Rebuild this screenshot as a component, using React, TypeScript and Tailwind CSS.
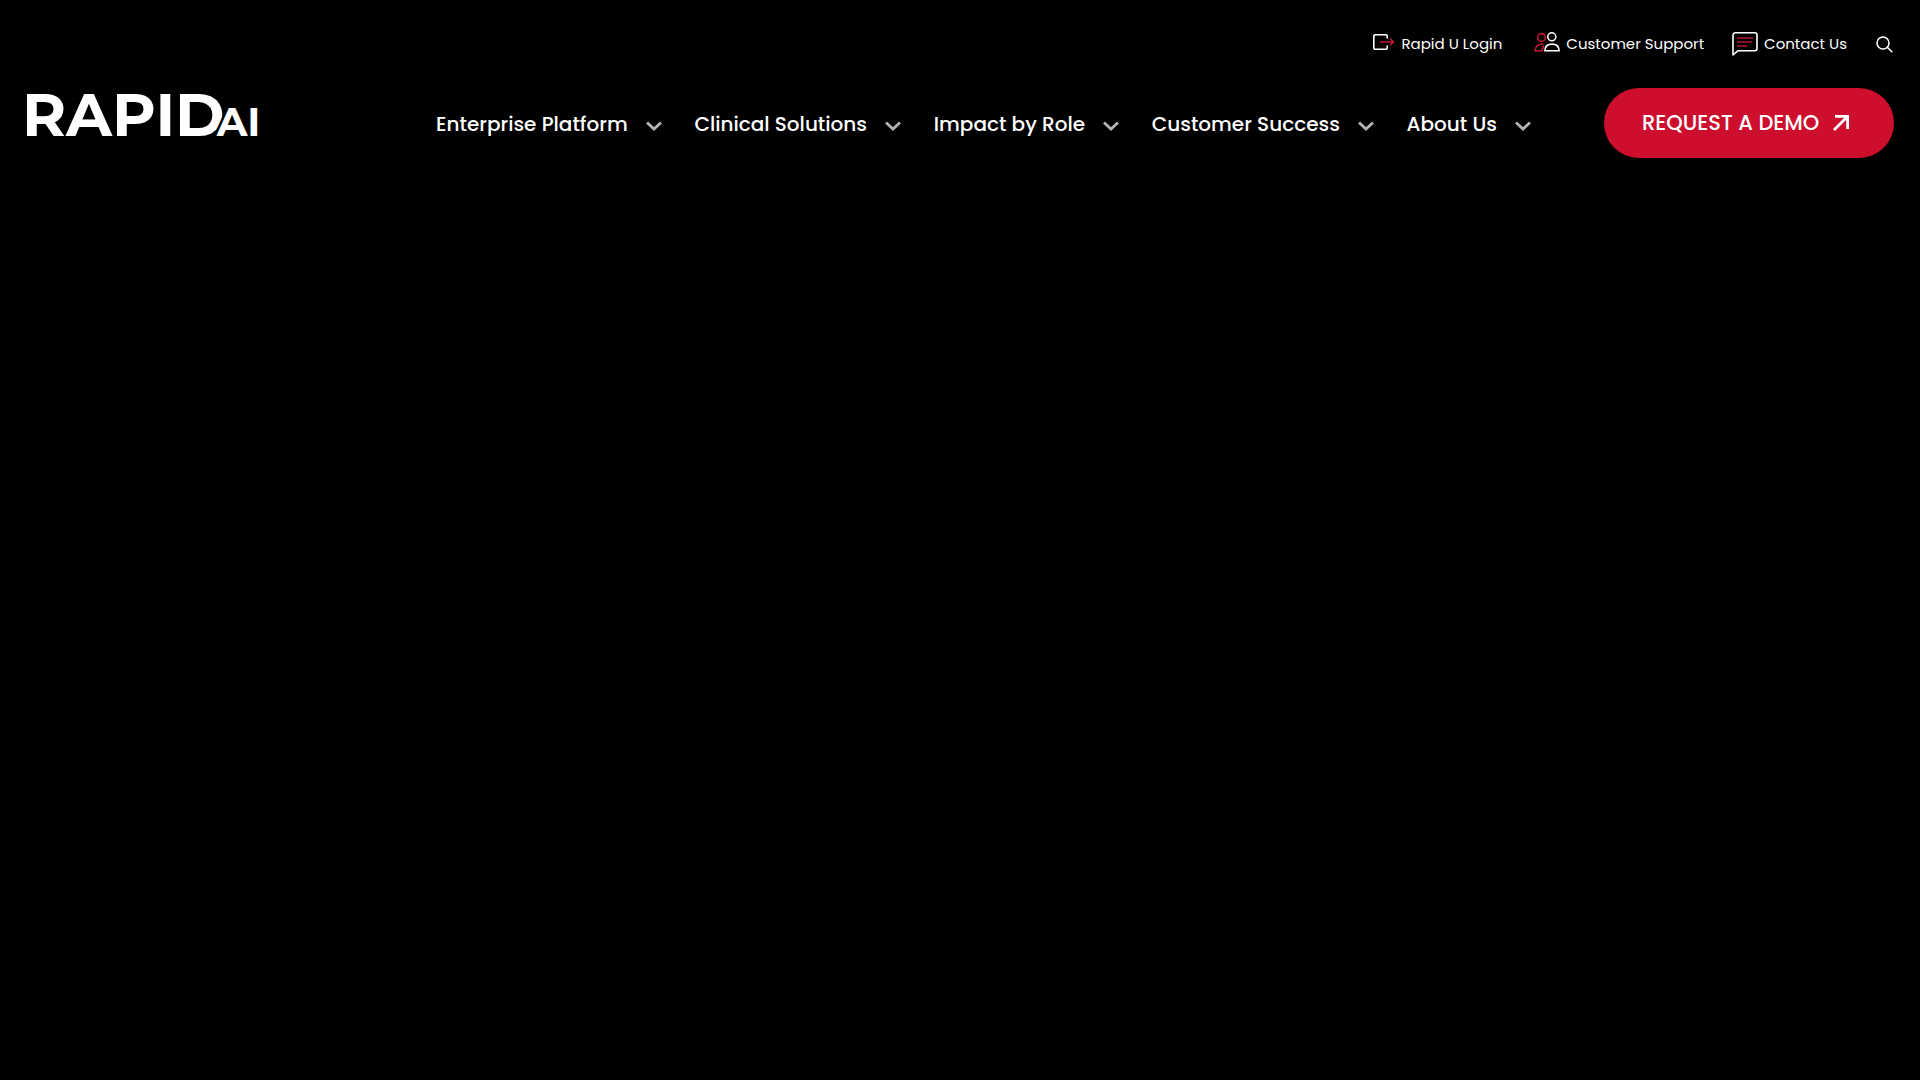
import React from "react";

const menu = [
  "Enterprise Platform",
  "Clinical Solutions",
  "Impact by Role",
  "Customer Success",
  "About Us",
];

function LoginIcon() {
  return (
    <svg className="-mt-1 h-4 w-[22px]" viewBox="0 0 22 16" fill="none" aria-hidden="true">
      <path d="M14.200 4.500V2A1.200 1.200 0 0 0 13 .8H2A1.200 1.200 0 0 0 .8 2v12A1.200 1.200 0 0 0 2 15.200h11a1.200 1.200 0 0 0 1.200-1.200v-2.500" stroke="#fff" strokeWidth="1.600" />
      <path d="M7 8h13.500M17 4.500 20.500 8 17 11.500" stroke="#c41732" strokeWidth="1.500" />
    </svg>
  );
}

function PeopleIcon() {
  return (
    <svg className="-mt-1 h-5 w-[26px]" viewBox="0 0 26 20" fill="none" strokeWidth="1.600" aria-hidden="true">
      <g stroke="#c41732">
        <circle cx="7.500" cy="5.500" r="3.900" />
        <path d="M9.500 12C4.500 11.600 1.500 14 .9 18.800h7.300c.1-2.200.8-4 1.800-5.300" />
      </g>
      <g stroke="#fff">
        <circle cx="17.800" cy="4.800" r="4" fill="#000" />
        <path d="M10.800 18.800c.2-4 2.800-6.700 7.200-6.700s7 2.700 7.200 6.700z" strokeLinejoin="round" />
      </g>
    </svg>
  );
}

function MessageIcon() {
  return (
    <svg className="h-6 w-[26px]" viewBox="0 0 26 24" fill="none" aria-hidden="true">
      <path d="M1 23V3a2.200 2.200 0 0 1 2.200-2.200h19.600A2.200 2.200 0 0 1 25 3v13.500a2.200 2.200 0 0 1-2.200 2.200H6z" stroke="#fff" strokeWidth="1.600" strokeLinejoin="round" />
      <path d="M5 6h16M5 10h15M5 14h10" stroke="#b5152c" strokeWidth="1.600" />
    </svg>
  );
}

function Chevron() {
  return (
    <svg className="mt-1 h-[10px] w-4 shrink-0" viewBox="0 0 16 10" fill="none" aria-hidden="true">
      <path d="m1 1.500 7 6.500 7-6.500" stroke="#b4b4b4" strokeWidth="2.800" />
    </svg>
  );
}

export default function App() {
  return (
    <div className="min-h-screen bg-black font-['Poppins','Inter',sans-serif] text-white">
      <header className="px-[26px] pt-7">
        <div className="flex h-8 items-center justify-end text-[15px]">
          <a href="#login" className="mr-8 flex items-center gap-[6px]">
            <LoginIcon />
            Rapid U Login
          </a>
          <a href="#support" className="mr-8 flex items-center gap-[6px]">
            <PeopleIcon />
            <span className="-mr-1">Customer Support</span>
          </a>
          <a href="#contact" className="mr-[29px] flex items-center gap-[6px]">
            <MessageIcon />
            Contact Us
          </a>
          <button type="button" aria-label="Search" className="pt-px pr-px">
            <svg className="h-[17px] w-[17px]" viewBox="0 0 17 17" fill="none" stroke="#fff" strokeWidth="1.500" aria-hidden="true">
              <circle cx="7" cy="7" r="6" />
              <path d="m11.300 11.300 5 5" />
            </svg>
          </button>
        </div>
        <div className="mt-7 flex h-[70px] items-center">
          <a href="#home" aria-label="RapidAI" className="flex w-[410px] shrink-0 items-baseline pb-4 font-['Montserrat','Poppins','Inter',sans-serif] leading-none font-bold">
            <span className="-ml-1 text-[60px]">RAPID</span>
            <span className="-ml-2 text-[40px] [-webkit-text-stroke:5px_black] [paint-order:stroke]">AI</span>
          </a>
          <nav className="flex flex-1 items-center justify-between pr-[73px] pt-0.5 text-xl font-medium">
            {menu.map((label) => (
              <button key={label} type="button" className="flex items-center gap-[18px] whitespace-nowrap">
                {label}
                <Chevron />
              </button>
            ))}
          </nav>
          <a href="#demo" className="flex h-[70px] w-[290px] shrink-0 items-center gap-[14px] rounded-full bg-[#ce0e2d] pl-[38px] text-[21px] font-medium whitespace-nowrap">
            REQUEST A DEMO
            <svg className="h-4 w-4 shrink-0" viewBox="0 0 16 16" fill="none" stroke="#fff" strokeWidth="2.800" aria-hidden="true">
              <path d="M1 15 14.500 1.500M2 1.400h12.600V14" />
            </svg>
          </a>
        </div>
      </header>
    </div>
  );
}
